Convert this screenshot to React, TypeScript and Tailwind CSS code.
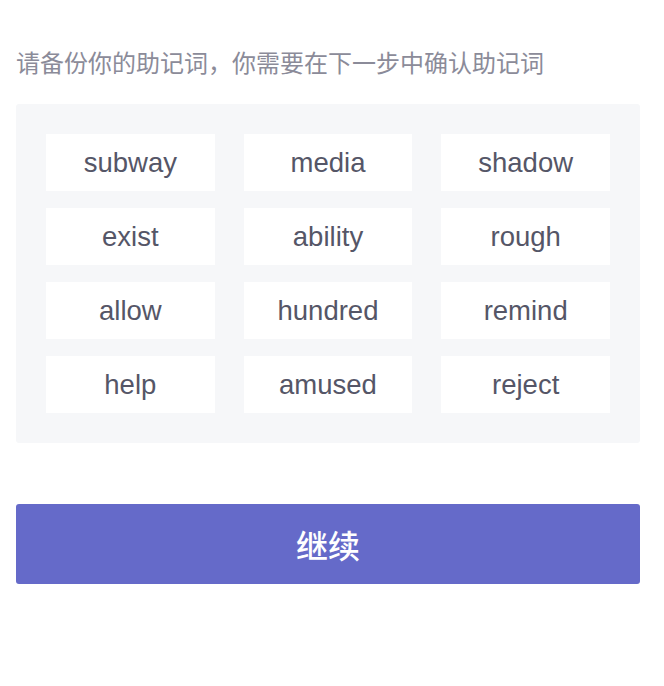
import React from "react";

const words = [
  "subway", "media", "shadow",
  "exist", "ability", "rough",
  "allow", "hundred", "remind",
  "help", "amused", "reject",
];

export default function App() {
  return (
    <div className="w-[664px] h-[686px] bg-white pl-4" style={{ fontFamily: '"Liberation Sans", Arial, "Noto Sans CJK SC", sans-serif' }}>
      <div className="w-[624px]">
        <div className="pt-[47px] h-[104px]">
          <p className="text-[24px] leading-[30px] text-[#8b8b99] whitespace-nowrap" style={{ fontFamily: '"Noto Sans CJK SC", sans-serif' }}>
            请备份你的助记词，你需要在下一步中确认助记词
          </p>
        </div>
        <div className="bg-[#f6f7f9] rounded-[3px] px-[30px] py-[30px] grid grid-cols-3 gap-x-[29px] gap-y-[17px]">
          {words.map((w) => (
            <div key={w} className="h-[57px] bg-white flex items-center justify-center text-[27.5px] text-[#555667]">
              {w}
            </div>
          ))}
        </div>
        <button className="mt-[61px] w-full h-[80px] rounded-[3px] bg-[#656ac9] text-white text-[32px] font-medium flex items-center justify-center" style={{ fontFamily: '"Noto Sans CJK SC", sans-serif' }}>
          继续
        </button>
      </div>
    </div>
  );
}
